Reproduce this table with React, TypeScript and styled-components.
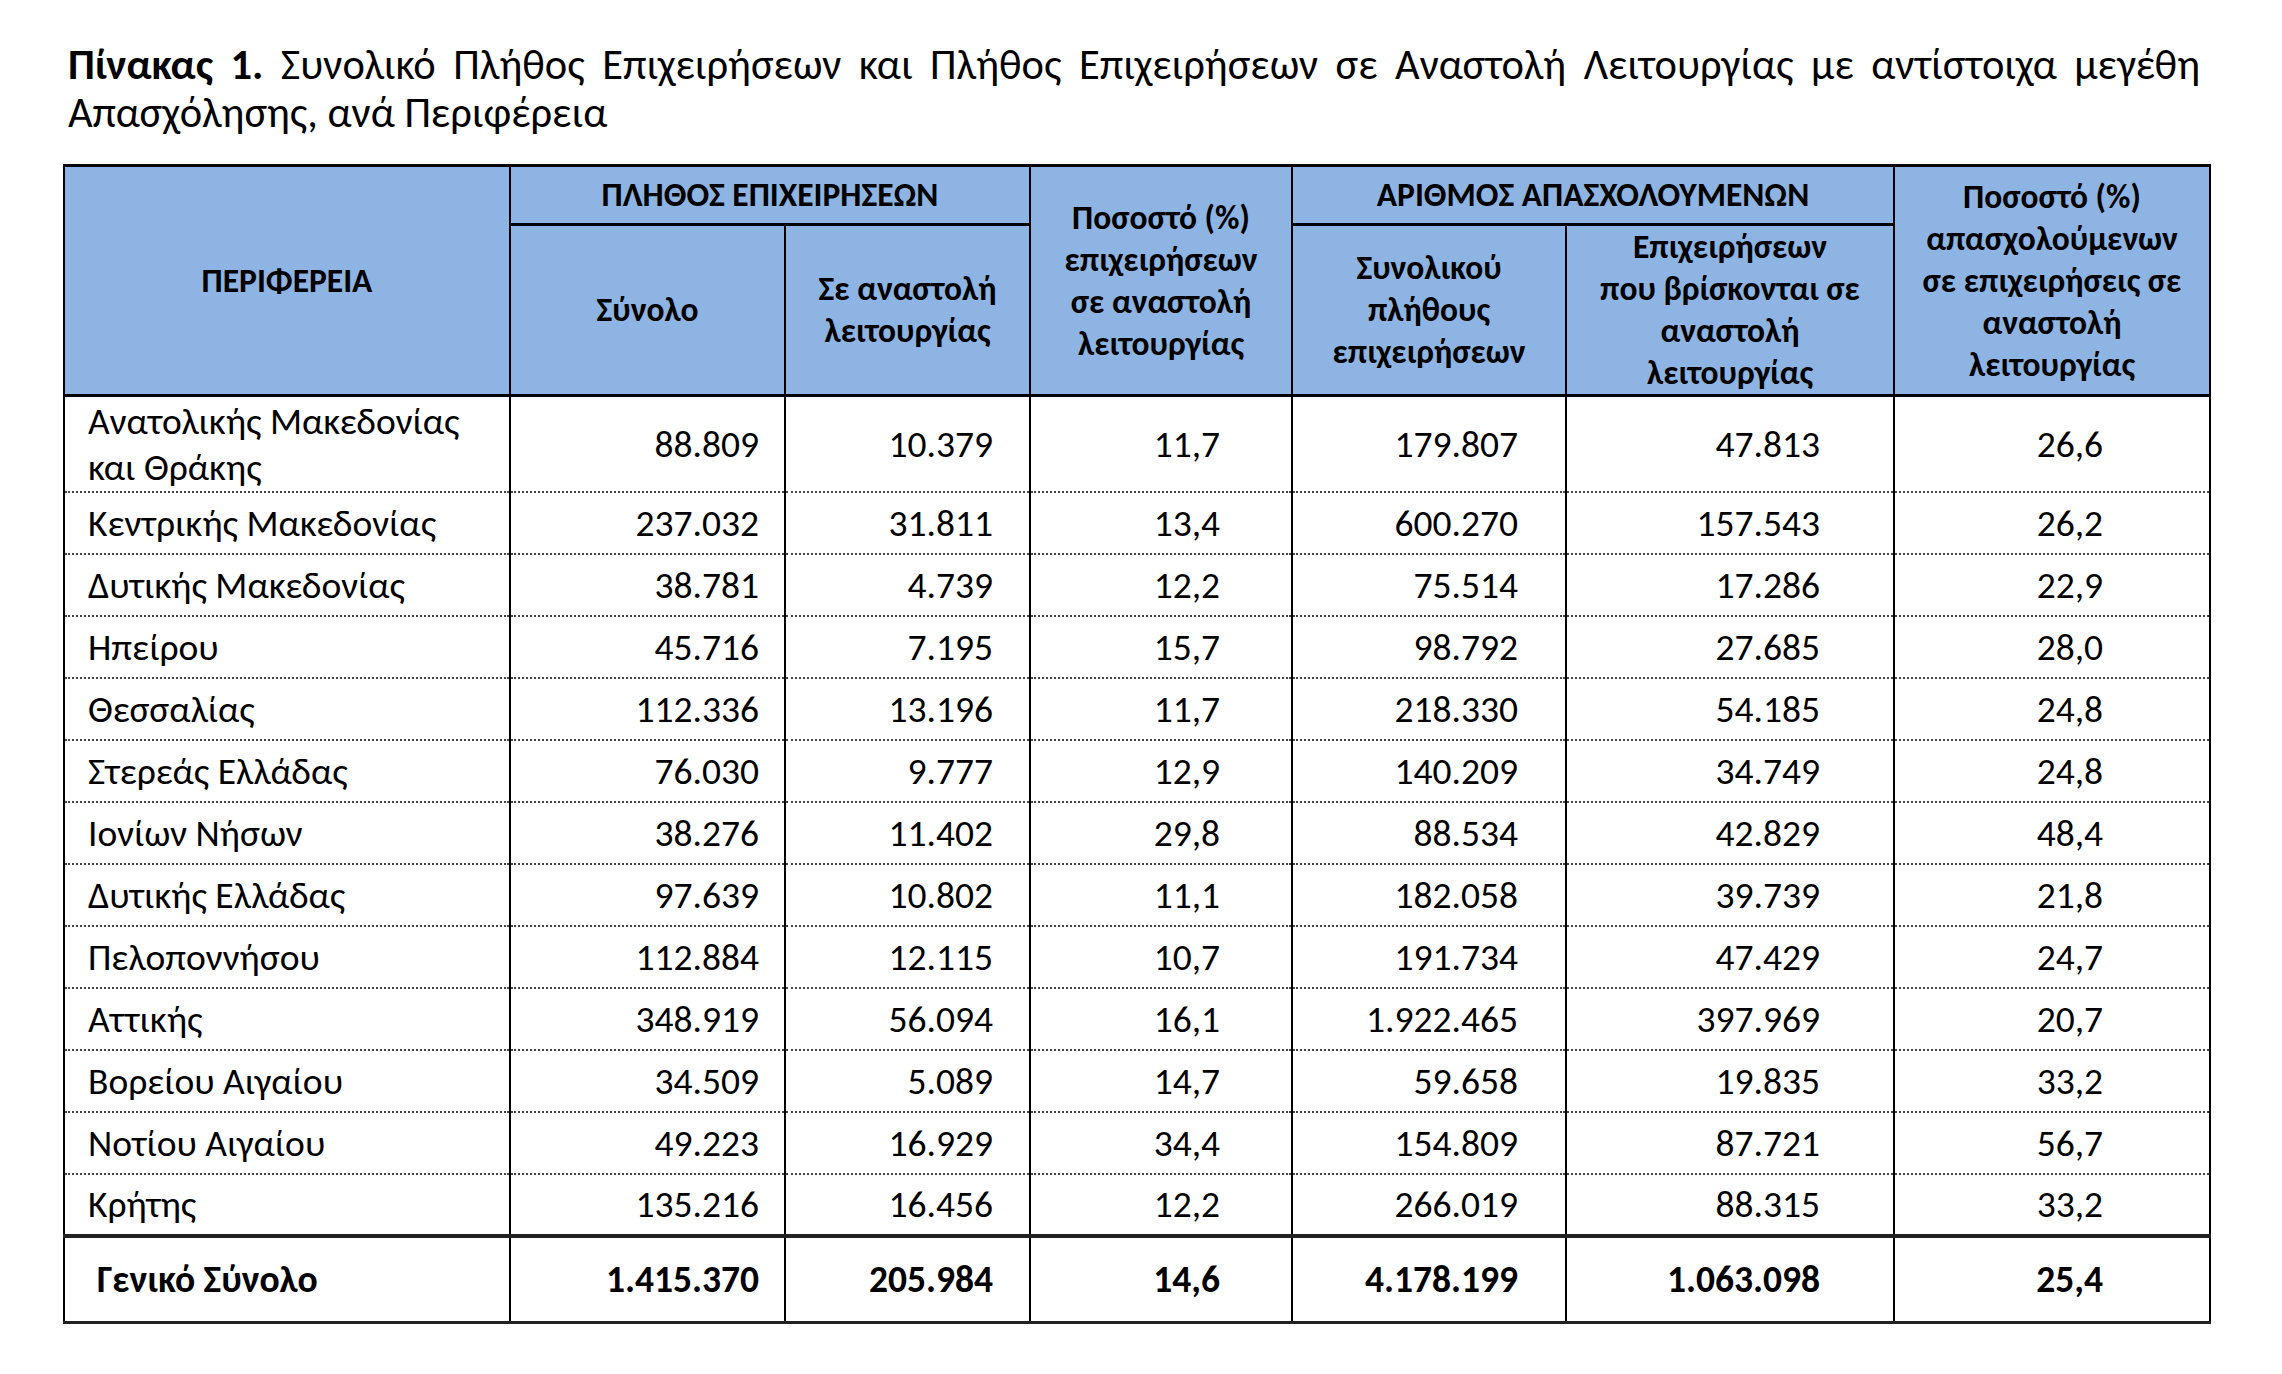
import React from "react";
import styled, { createGlobalStyle } from "styled-components";

const GlobalStyle = createGlobalStyle`
  html, body {
    margin: 0;
    padding: 0;
    background: #ffffff;
  }
  body {
    font-family: Carlito, "Liberation Sans Narrow", "DejaVu Sans Condensed", "Liberation Sans", sans-serif;
    color: #000;
  }
`;

const Page = styled.div`
  padding: 41px 0 40px 63px;
`;

const Caption = styled.div`
  width: 2132px;
  margin: 0 0 27px 5px;
  font-size: 42.5px;
  line-height: 48px;
`;

const CaptionLine = styled.div<{ $justify?: boolean }>`
  text-align: ${(p) => (p.$justify ? "justify" : "left")};
  text-align-last: ${(p) => (p.$justify ? "justify" : "auto")};
`;

const Strong = styled.b`
  font-weight: bold;
`;

const Table = styled.table`
  width: 2146px;
  table-layout: fixed;
  border-collapse: collapse;
  border: 2px solid #000;
  border-top-width: 3px;
`;

const HeadRow = styled.tr<{ $h: number }>`
  height: ${(p) => p.$h}px;
`;

const HeadCell = styled.th`
  background: #8db4e2;
  border: 2px solid #000;
  border-bottom-width: 3px;
  padding: 0 8px;
  font-size: 33.5px;
  line-height: 42px;
  font-weight: bold;
  text-align: center;
  vertical-align: middle;
`;

const Row = styled.tr<{ $h: number; $total?: boolean }>`
  height: ${(p) => p.$h}px;
  font-weight: ${(p) => (p.$total ? "bold" : "normal")};

  td {
    border-left: 2px solid #000;
    border-right: 2px solid #000;
    border-bottom: ${(p) => (p.$total ? "3px solid #222" : "2px dotted #444")};
    border-top: ${(p) => (p.$total ? "4px solid #222" : "none")};
  }
`;

const NameCell = styled.td<{ $indent: number }>`
  padding: 0 8px 0 ${(p) => p.$indent}px;
  font-size: 37.5px;
  line-height: 46px;
  text-align: left;
  vertical-align: middle;
  white-space: pre-line;
`;

const NumCell = styled.td<{ $pad: number }>`
  padding: 0 ${(p) => p.$pad}px 0 0;
  font-size: 37.5px;
  line-height: 46px;
  text-align: right;
  vertical-align: middle;
  white-space: nowrap;
`;

const widths = [446, 275, 245, 262, 274, 328, 316];
const pads = [25, 36, 71, 47, 73, 106];

const rows: string[][] = [
  ["Ανατολικής Μακεδονίας\nκαι Θράκης", "88.809", "10.379", "11,7", "179.807", "47.813", "26,6"],
  ["Κεντρικής Μακεδονίας", "237.032", "31.811", "13,4", "600.270", "157.543", "26,2"],
  ["Δυτικής Μακεδονίας", "38.781", "4.739", "12,2", "75.514", "17.286", "22,9"],
  ["Ηπείρου", "45.716", "7.195", "15,7", "98.792", "27.685", "28,0"],
  ["Θεσσαλίας", "112.336", "13.196", "11,7", "218.330", "54.185", "24,8"],
  ["Στερεάς Ελλάδας", "76.030", "9.777", "12,9", "140.209", "34.749", "24,8"],
  ["Ιονίων Νήσων", "38.276", "11.402", "29,8", "88.534", "42.829", "48,4"],
  ["Δυτικής Ελλάδας", "97.639", "10.802", "11,1", "182.058", "39.739", "21,8"],
  ["Πελοποννήσου", "112.884", "12.115", "10,7", "191.734", "47.429", "24,7"],
  ["Αττικής", "348.919", "56.094", "16,1", "1.922.465", "397.969", "20,7"],
  ["Βορείου Αιγαίου", "34.509", "5.089", "14,7", "59.658", "19.835", "33,2"],
  ["Νοτίου Αιγαίου", "49.223", "16.929", "34,4", "154.809", "87.721", "56,7"],
  ["Κρήτης", "135.216", "16.456", "12,2", "266.019", "88.315", "33,2"],
];

const total = ["Γενικό Σύνολο", "1.415.370", "205.984", "14,6", "4.178.199", "1.063.098", "25,4"];

function DataRow({ cells, total, height }: { cells: string[]; total?: boolean; height: number }) {
  return (
    <Row $h={height} $total={total}>
      <NameCell $indent={total ? 32 : 23}>{cells[0]}</NameCell>
      {cells.slice(1).map((v, i) => (
        <NumCell key={i} $pad={pads[i]}>
          {v}
        </NumCell>
      ))}
    </Row>
  );
}

export default function App() {
  return (
    <>
      <GlobalStyle />
      <Page>
        <Caption>
          <CaptionLine $justify>
            <Strong>Πίνακας 1.</Strong> Συνολικό Πλήθος Επιχειρήσεων και Πλήθος Επιχειρήσεων σε Αναστολή
            Λειτουργίας με αντίστοιχα μεγέθη
          </CaptionLine>
          <CaptionLine>Απασχόλησης, ανά Περιφέρεια</CaptionLine>
        </Caption>
        <Table>
          <colgroup>
            {widths.map((w, i) => (
              <col key={i} style={{ width: w }} />
            ))}
          </colgroup>
          <thead>
            <HeadRow $h={59}>
              <HeadCell rowSpan={2}>ΠΕΡΙΦΕΡΕΙΑ</HeadCell>
              <HeadCell colSpan={2}>ΠΛΗΘΟΣ ΕΠΙΧΕΙΡΗΣΕΩΝ</HeadCell>
              <HeadCell rowSpan={2}>
                Ποσοστό (%)
                <br />
                επιχειρήσεων
                <br />
                σε αναστολή
                <br />
                λειτουργίας
              </HeadCell>
              <HeadCell colSpan={2}>ΑΡΙΘΜΟΣ ΑΠΑΣΧΟΛΟΥΜΕΝΩΝ</HeadCell>
              <HeadCell rowSpan={2}>
                Ποσοστό (%)
                <br />
                απασχολούμενων
                <br />
                σε επιχειρήσεις σε
                <br />
                αναστολή
                <br />
                λειτουργίας
              </HeadCell>
            </HeadRow>
            <HeadRow $h={164}>
              <HeadCell>Σύνολο</HeadCell>
              <HeadCell>
                Σε αναστολή
                <br />
                λειτουργίας
              </HeadCell>
              <HeadCell>
                Συνολικού
                <br />
                πλήθους
                <br />
                επιχειρήσεων
              </HeadCell>
              <HeadCell>
                Επιχειρήσεων
                <br />
                που βρίσκονται σε
                <br />
                αναστολή
                <br />
                λειτουργίας
              </HeadCell>
            </HeadRow>
          </thead>
          <tbody>
            {rows.map((r, i) => (
              <DataRow key={i} cells={r} height={i === 0 ? 96 : 62} />
            ))}
            <DataRow cells={total} total height={87} />
          </tbody>
        </Table>
      </Page>
    </>
  );
}
